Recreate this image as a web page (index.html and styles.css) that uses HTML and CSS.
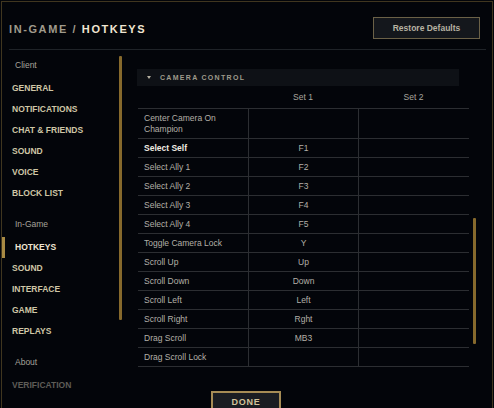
FILE: index.html
```html
<!DOCTYPE html>
<html>
<head>
<meta charset="utf-8">
<link rel="stylesheet" href="styles.css">
</head>
<body>
<div class="app">
  <header class="top">
    <h1 class="title"><span class="crumb">IN-GAME /</span> <span class="page">HOTKEYS</span></h1>
    <button class="restore">Restore Defaults</button>
  </header>
  <div class="main">
    <nav class="sidebar">
      <div class="group">
        <div class="label">Client</div>
        <div class="item">GENERAL</div>
        <div class="item">NOTIFICATIONS</div>
        <div class="item">CHAT &amp; FRIENDS</div>
        <div class="item">SOUND</div>
        <div class="item">VOICE</div>
        <div class="item">BLOCK LIST</div>
      </div>
      <div class="group">
        <div class="label">In-Game</div>
        <div class="item active">HOTKEYS</div>
        <div class="item">SOUND</div>
        <div class="item">INTERFACE</div>
        <div class="item">GAME</div>
        <div class="item">REPLAYS</div>
      </div>
      <div class="group">
        <div class="label">About</div>
        <div class="item dim">VERIFICATION</div>
      </div>
    </nav>
    <div class="track side-track"><div class="thumb side-thumb"></div></div>
    <section class="content">
      <div class="section-head"><span class="caret"></span>CAMERA CONTROL</div>
      <div class="table">
        <div class="row head"><div class="cell"></div><div class="cell">Set 1</div><div class="cell">Set 2</div></div>
        <div class="row tall"><div class="cell name">Center Camera On Champion</div><div class="cell"></div><div class="cell"></div></div>
        <div class="row"><div class="cell name strong">Select Self</div><div class="cell">F1</div><div class="cell"></div></div>
        <div class="row"><div class="cell name">Select Ally 1</div><div class="cell">F2</div><div class="cell"></div></div>
        <div class="row"><div class="cell name">Select Ally 2</div><div class="cell">F3</div><div class="cell"></div></div>
        <div class="row"><div class="cell name">Select Ally 3</div><div class="cell">F4</div><div class="cell"></div></div>
        <div class="row"><div class="cell name">Select Ally 4</div><div class="cell">F5</div><div class="cell"></div></div>
        <div class="row"><div class="cell name">Toggle Camera Lock</div><div class="cell">Y</div><div class="cell"></div></div>
        <div class="row"><div class="cell name">Scroll Up</div><div class="cell">Up</div><div class="cell"></div></div>
        <div class="row"><div class="cell name">Scroll Down</div><div class="cell">Down</div><div class="cell"></div></div>
        <div class="row"><div class="cell name">Scroll Left</div><div class="cell">Left</div><div class="cell"></div></div>
        <div class="row"><div class="cell name">Scroll Right</div><div class="cell">Rght</div><div class="cell"></div></div>
        <div class="row"><div class="cell name">Drag Scroll</div><div class="cell">MB3</div><div class="cell"></div></div>
        <div class="row"><div class="cell name">Drag Scroll Lock</div><div class="cell"></div><div class="cell"></div></div>
      </div>
      <div class="footer"><button class="done">DONE</button></div>
    </section>
    <div class="track content-track"><div class="thumb content-thumb"></div></div>
  </div>
</div>
</body>
</html>
```

FILE: styles.css
```css
* { box-sizing: border-box; }
html, body {
  margin: 0;
  padding: 0;
  height: 408px;
  overflow: hidden;
  background: #03050a;
  font-family: "Liberation Sans", Arial, sans-serif;
}
.app {
  margin: 1px 1px 0 1px;
  height: 407px;
  border: 1px solid #40361f;
  border-bottom: none;
  background: #03050a;
  display: flex;
  flex-direction: column;
}
.top {
  flex-shrink: 0;
  margin: 0 6px 0 7px;
  height: 48px;
  padding: 14px 6px 10px 0;
  border-bottom: 1px solid #1f2328;
  display: flex;
  align-items: center;
  justify-content: space-between;
}
.title {
  margin: 3px 0 0 0;
  font-size: 11px;
  font-weight: bold;
  letter-spacing: 1.6px;
  white-space: nowrap;
}
.crumb { color: #a09b8c; }
.page { color: #f0e6d2; }
.restore {
  width: 107px;
  height: 22px;
  background: #14171c;
  border: 1px solid #6b6147;
  color: #b7b2a2;
  font-family: "Liberation Sans", Arial, sans-serif;
  font-size: 8.5px;
  font-weight: bold;
  padding: 0;
}
.main {
  flex: 1;
  display: flex;
  min-height: 0;
}
.sidebar {
  flex-shrink: 0;
  width: 117px;
  padding-top: 5px;
}
.group + .group { margin-top: 10px; }
.label {
  line-height: 21px;
  margin-bottom: 2px;
  padding-left: 13px;
  font-size: 8.5px;
  color: #a6a39a;
}
.item {
  line-height: 21px;
  padding-left: 10px;
  font-size: 8.5px;
  font-weight: bold;
  color: #cfc6a6;
  white-space: nowrap;
}
.item.active {
  color: #f0e6d2;
  border-left: 3px solid #a88a44;
  padding-left: 10px;
}
.item.dim { color: #5e5c57; }
.track { width: 3px; flex-shrink: 0; }
.thumb { background: #86692c; border-radius: 1px; }
.side-thumb { margin-top: 6px; height: 264px; }
.content {
  flex-shrink: 0;
  margin-left: 15px;
  width: 332px;
  padding-top: 19px;
}
.section-head {
  width: 322px;
  height: 17px;
  background: #0e1116;
  display: flex;
  align-items: center;
  padding-left: 10px;
  font-size: 7px;
  font-weight: bold;
  letter-spacing: 1.3px;
  color: #9f9a8b;
}
.caret {
  width: 0;
  height: 0;
  border-left: 2px solid transparent;
  border-right: 2px solid transparent;
  border-top: 3px solid #b6b1a2;
  margin-right: 9px;
}
.table {
  margin-left: 1px;
  width: 331px;
}
.row {
  display: grid;
  grid-template-columns: 110px 110px 111px;
  height: 19px;
  border-bottom: 1px solid #2c2e32;
}
.row.head { height: 23px; }
.row.tall { height: 30px; }
.cell {
  display: flex;
  align-items: center;
  justify-content: center;
  font-size: 8.5px;
  color: #b3b0a8;
  line-height: 11px;
}
.row:not(.head) .cell + .cell { border-left: 1px solid #2c2e32; }
.row.head .cell { color: #a9a69e; padding-top: 1px; }
.cell.name {
  justify-content: flex-start;
  padding-left: 6px;
  padding-right: 20px;
}
.cell.strong { color: #f0ece2; font-weight: bold; }
.footer {
  padding-top: 24px;
  padding-left: 74px;
}
.done {
  width: 70px;
  height: 24px;
  background: #1a1d22;
  border: 2px solid #a68c55;
  color: #d2c39a;
  font-family: "Liberation Sans", Arial, sans-serif;
  font-size: 9px;
  font-weight: bold;
  letter-spacing: 0.8px;
  padding: 0 0 2px 0;
}
.content-track { margin-left: 4px; }
.content-thumb { margin-top: 168px; height: 126px; }
```
